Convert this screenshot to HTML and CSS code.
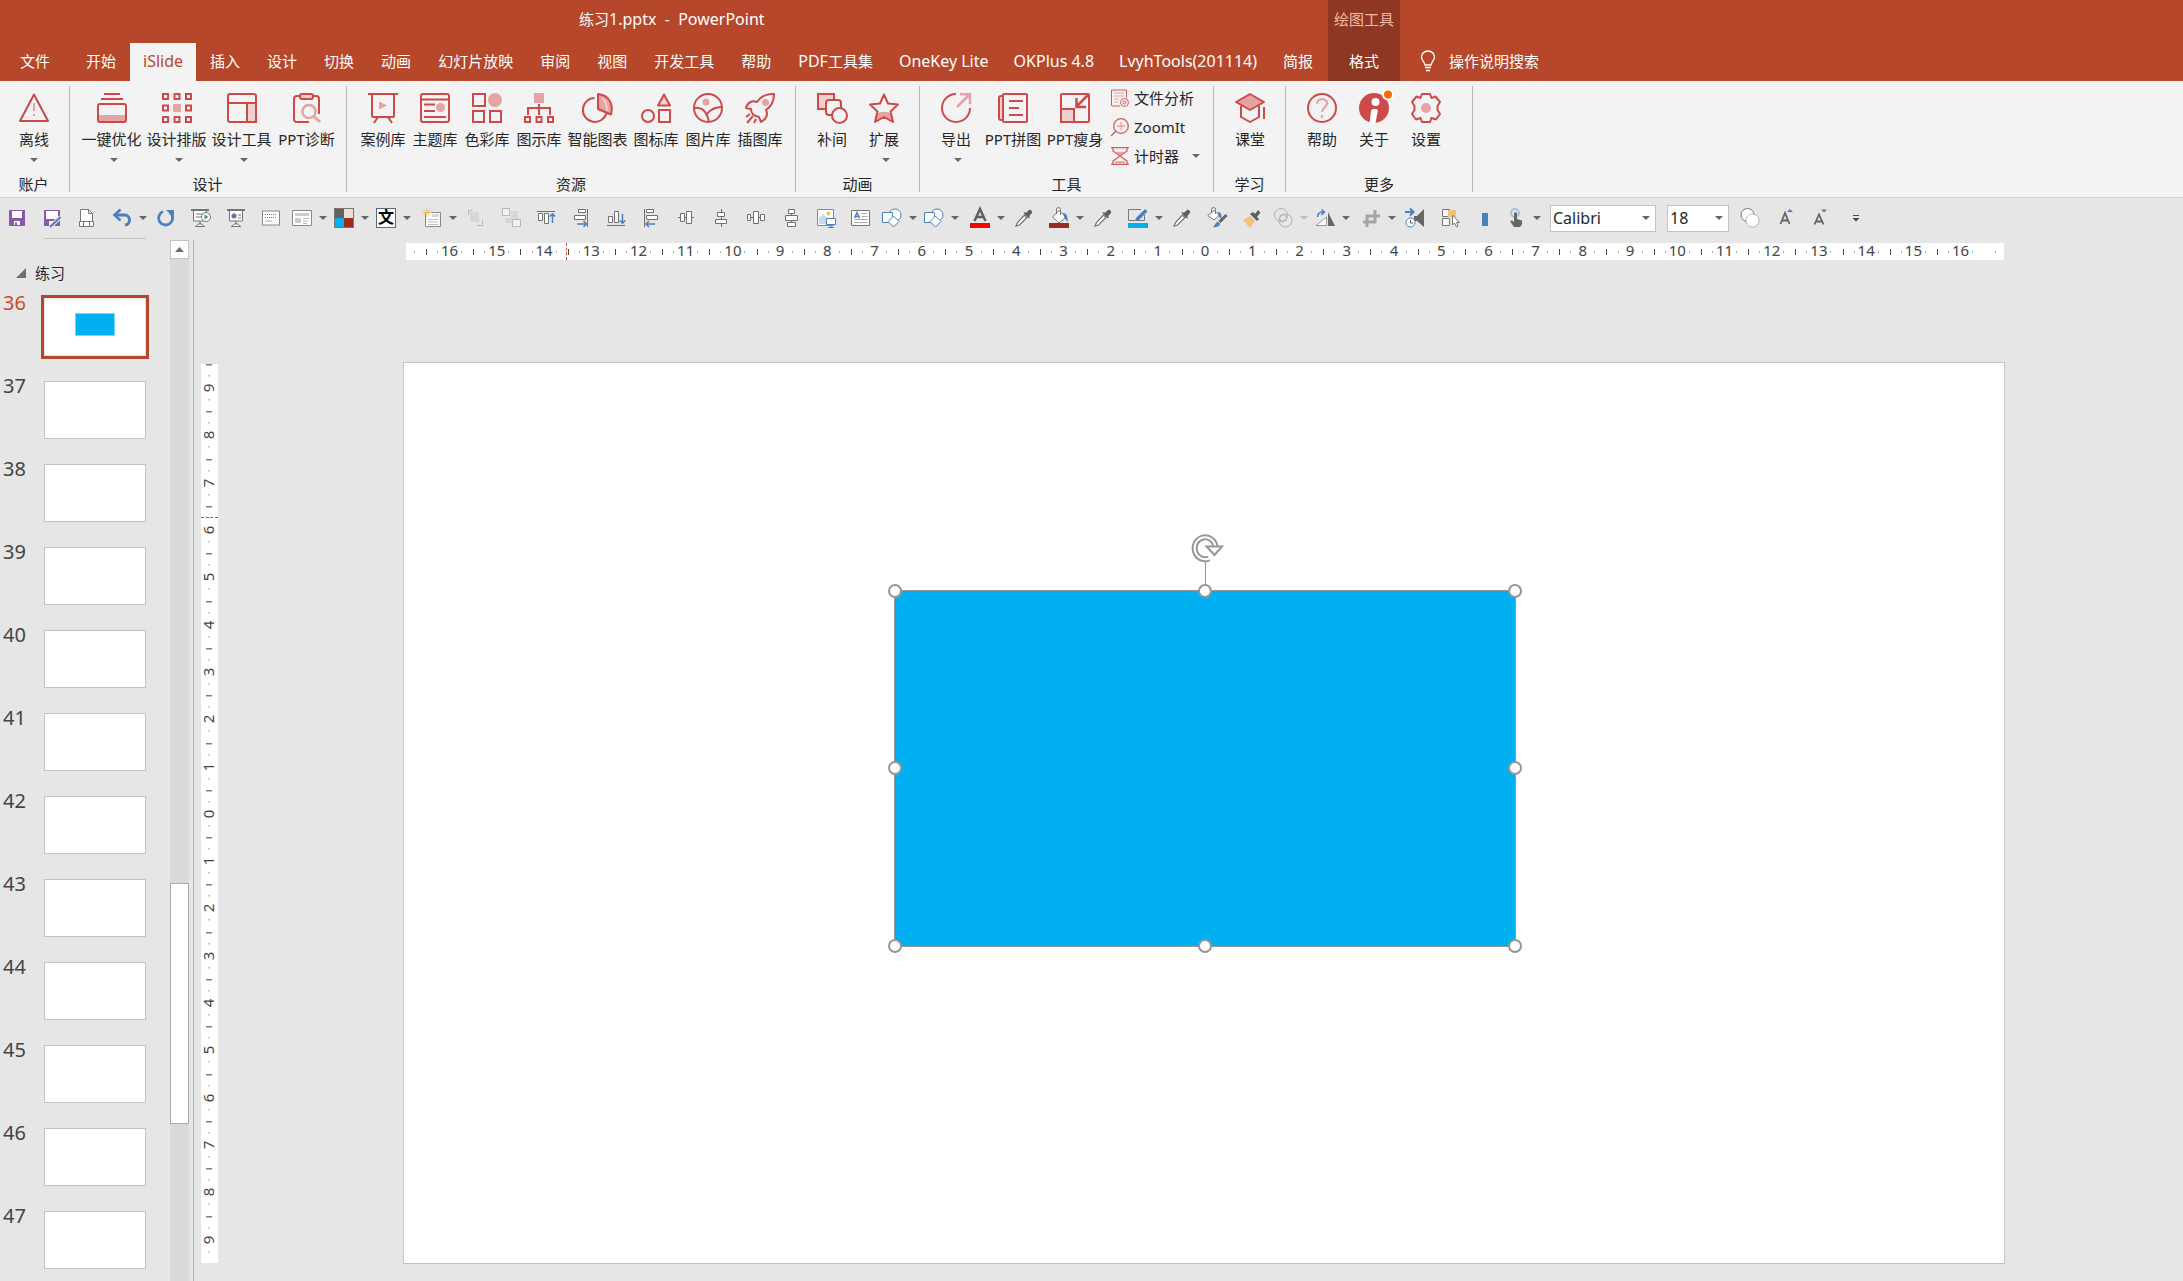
FILE: index.html
```html
<!DOCTYPE html>
<html lang="zh-CN">
<head>
<meta charset="utf-8">
<meta name="viewport" content="width=device-width, initial-scale=1">
<title>练习1.pptx - PowerPoint</title>
<link rel="stylesheet" href="styles.css">
</head>
<body>
<svg class="sprite" aria-hidden="true">
  <symbol id="dropper" viewBox="0 0 20 20"><path d="M2 18l1.500-3.500L10.500 7l2.500 2.500-7.500 7.500z" fill="#fff" stroke="#6e6e6e" stroke-width="1.200"/><path d="M9.500 5l5.500 5.500 1-1.200-1-1 3-3.300c1-1.500-1.500-4-3-3L11.800 5l-1-1z" fill="#5f5f5f"/></symbol>
  <symbol id="shapes" viewBox="0 0 20 20"><circle cx="13" cy="7" r="6" fill="#fff" stroke="#4a80bd"/><path d="M.5 4.500h10v10H.5z" fill="#fff" stroke="#4a80bd"/><path d="M11.500 8l5.500 5.500-5.500 5.500L6 13.500z" fill="#fff" stroke="#4a80bd"/></symbol>
</svg>

<header class="titlebar">
  <h1 class="title">练习<span class="latin">1.pptx&nbsp; -&nbsp; PowerPoint</span></h1>
  <nav class="tabs" aria-label="功能区选项卡">
    <button class="tab tab-file">文件</button>
    <button class="tab">开始</button>
    <button class="tab latin is-active">iSlide</button>
    <button class="tab">插入</button>
    <button class="tab">设计</button>
    <button class="tab">切换</button>
    <button class="tab">动画</button>
    <button class="tab">幻灯片放映</button>
    <button class="tab">审阅</button>
    <button class="tab">视图</button>
    <button class="tab">开发工具</button>
    <button class="tab">帮助</button>
    <button class="tab"><span class="latin">PDF</span>工具集</button>
    <button class="tab latin addin">OneKey Lite</button>
    <button class="tab latin addin">OKPlus 4.8</button>
    <button class="tab latin addin">LvyhTools(201114)</button>
    <button class="tab">简报</button>
    <div class="context">
      <span class="context-name">绘图工具</span>
      <button class="tab">格式</button>
    </div>
    <button class="tab tellme">
      <svg width="16" height="22" viewBox="0 0 16 22" fill="none" stroke="#fff" stroke-width="1.400"><path d="M5 15c0-3-3.500-4-3.500-8a6.500 6 0 0 1 13 0c0 4-3.500 5-3.500 8zM5 17.500h6M6 20.500h4"/></svg>
      操作说明搜索
    </button>
  </nav>
</header>

<section class="ribbon" aria-label="iSlide">
  <div class="group g-account">
    <div class="tools">
      <button class="big"><svg viewBox="0 0 30 30" fill="none" stroke="#c8494a" stroke-width="2" stroke-linejoin="round"><path d="M15 1.500L29 28H1z"/><path d="M15 10v8M15 21v2" stroke="#e5a3a3"/></svg><span>离线</span><i class="caret"></i></button>
    </div>
    <h2>账户</h2>
  </div>
  <div class="group g-design">
    <div class="tools">
      <button class="big four"><svg viewBox="0 0 30 30" fill="none" stroke="#ce4a4a" stroke-width="2"><path d="M1 22h28v7H1z" fill="#e5a3a3" stroke="none"/><path d="M7 1h16M4 6h22"/><rect x="1" y="11" width="28" height="18" rx="2"/></svg><span>一键优化</span><i class="caret"></i></button>
      <button class="big four"><svg viewBox="0 0 30 30" fill="none" stroke="#ce4a4a" stroke-width="2"><path d="M1 1h5v5H1zM12.500 1h5v5h-5zM24 1h5v5h-5zM1 12.500h5v5H1zM24 12.500h5v5h-5zM1 24h5v5H1zM12.500 24h5v5h-5zM24 24h5v5h-5z"/><rect x="11" y="11" width="8" height="8" rx="1" fill="#e5a3a3" stroke="none"/></svg><span>设计排版</span><i class="caret"></i></button>
      <button class="big four"><svg viewBox="0 0 30 30" fill="none" stroke="#ce4a4a" stroke-width="2"><path d="M20 10h9v19h-9z" fill="#f2d0d0"/><rect x="1" y="1" width="28" height="28" rx="2"/><path d="M1 10h28"/></svg><span>设计工具</span><i class="caret"></i></button>
      <button class="big four"><svg viewBox="0 0 30 30" fill="none" stroke="#ce4a4a" stroke-width="2"><path d="M17 29H5a3 3 0 0 1-3-3V6a3 3 0 0 1 3-3h3M21 3h3a3 3 0 0 1 3 3v15"/><rect x="8" y="1" width="13" height="5" rx="2" fill="#f2d0d0"/><circle cx="17" cy="18.500" r="6.500" stroke="#e5a3a3" stroke-width="2.500"/><path d="M22 23.500l6 5.500" stroke="#e5a3a3" stroke-width="3"/></svg><span>PPT诊断</span></button>
    </div>
    <h2>设计</h2>
  </div>
  <div class="group g-assets">
    <div class="tools">
      <button class="big"><svg viewBox="0 0 30 30" fill="none" stroke="#ce4a4a" stroke-width="2"><path d="M0 1h30M4 1v22a1 1 0 0 0 1 1h20a1 1 0 0 0 1-1V1M10 24l-4 6M20 24l4 6"/><path d="M11 8.500l8 4-8 4z" fill="#e5a3a3" stroke="none"/></svg><span>案例库</span></button>
      <button class="big"><svg viewBox="0 0 30 30" fill="none" stroke="#ce4a4a" stroke-width="2"><rect x="1" y="1" width="28" height="28" rx="2"/><path d="M1 6.500h28M4 11.500h11M4 18h11M4 24h22"/><circle cx="20.500" cy="14.500" r="4.500" fill="#e5a3a3" stroke="none"/></svg><span>主题库</span></button>
      <button class="big"><svg viewBox="0 0 30 30" fill="none" stroke="#ce4a4a" stroke-width="2"><path d="M1 1h12v12H1zM1 18h11v11H1zM18 18h11v11H18z"/><circle cx="23" cy="7" r="7" fill="#e5a3a3" stroke="none"/></svg><span>色彩库</span></button>
      <button class="big"><svg viewBox="0 0 30 30" fill="none" stroke="#ce4a4a" stroke-width="2"><path d="M10 0h10v10H10z" fill="#e5a3a3" stroke="none"/><path d="M15 11v11M4 22v-7h22v7M1 24h5v5H1zM12.500 24h5v5h-5zM24 24h5v5h-5z"/></svg><span>图示库</span></button>
      <button class="big four"><svg viewBox="0 0 30 30" fill="none" stroke="#ce4a4a" stroke-width="2" stroke-linejoin="round"><path d="M11.500 5a12 12 0 1 0 12 15"/><path d="M15 1v15l13 5.500C31 10 25 2 15 1z" fill="#e5a3a3"/><path d="M19 5c4 3 5 8 5 13" stroke="#f2d0d0"/></svg><span>智能图表</span></button>
      <button class="big"><svg viewBox="0 0 30 30" fill="none" stroke="#ce4a4a" stroke-width="2" stroke-linejoin="round"><circle cx="7" cy="23" r="6"/><path d="M18 17h11v12H18z"/><path d="M23 1.500l6 11H17z" fill="#f2d0d0"/></svg><span>图标库</span></button>
      <button class="big"><svg viewBox="0 0 30 30" fill="none" stroke="#ce4a4a" stroke-width="2"><circle cx="15" cy="15" r="14"/><path d="M1.500 15C9 14 14 19 16 29M29 14c-8 0-12 3-15 7"/><circle cx="13" cy="9" r="3.500" fill="#e5a3a3" stroke="none"/></svg><span>图片库</span></button>
      <button class="big"><svg viewBox="0 0 30 30" fill="none" stroke="#ce4a4a" stroke-width="2" stroke-linejoin="round"><path d="M29 1c-8-.5-13 2-17 8-5-2-9 0-11 6l5 1c0 4 3 7 8 8l2 5c6-3 7-8 5-12 6-4 8-9 8-16z"/><circle cx="20.500" cy="9.500" r="3.500" fill="#e5a3a3" stroke="none"/><path d="M5 21l-4 3M8 23l-6 7M11 26l-2 4"/></svg><span>插图库</span></button>
    </div>
    <h2>资源</h2>
  </div>
  <div class="group g-anim">
    <div class="tools">
      <button class="big"><svg viewBox="0 0 30 30" fill="none" stroke="#ce4a4a" stroke-width="2"><path d="M1 1h16v15H1z" fill="#f2d0d0"/><rect x="9" y="7" width="15" height="15" rx="3" fill="#f3f3f3"/><circle cx="22.500" cy="22.500" r="7.500" fill="#f3f3f3"/></svg><span>补间</span></button>
      <button class="big"><svg viewBox="0 0 30 30" fill="none" stroke="#ce4a4a" stroke-width="2" stroke-linejoin="round"><path d="M7 21c5-3 11-3 16 0l1 7-9-4-9 4z" fill="#e5a3a3" stroke="none"/><path d="M15 1.500l4 9 10 1-7.500 7L24 29l-9-5-9 5 2.500-10.500L1 11.500l10-1z"/></svg><span>扩展</span><i class="caret"></i></button>
    </div>
    <h2>动画</h2>
  </div>
  <div class="group g-tools">
    <div class="tools">
      <button class="big"><svg viewBox="0 0 30 30" fill="none" stroke="#ce4a4a" stroke-width="2"><path d="M15 1a14 14 0 1 0 14 14"/><path d="M16 14L28 2M19 1.200h10v10" stroke="#e5a3a3" stroke-width="2.500"/></svg><span>导出</span><i class="caret"></i></button>
      <button class="big ppt"><svg viewBox="0 0 30 30" fill="none" stroke="#ce4a4a" stroke-width="2"><path d="M5 3H3a2 2 0 0 0-2 2v20a2 2 0 0 0 2 2h2z" fill="#f2d0d0"/><rect x="5" y="1" width="24" height="28" rx="1"/><path d="M11 8h14M11 15h10M11 22h14"/></svg><span>PPT拼图</span></button>
      <button class="big ppt"><svg viewBox="0 0 30 30" fill="none" stroke="#ce4a4a" stroke-width="2"><path d="M1 16h13v13H1z" fill="#f2d0d0"/><rect x="1" y="1" width="28" height="28" rx="1"/><path d="M28 2L17 13M16.500 5v9H26" stroke-width="2.500"/></svg><span>PPT瘦身</span></button>
      <div class="small-tools">
        <button class="small"><svg width="18" height="18" viewBox="0 0 18 18" fill="none" stroke="#d25a5a"><path d="M9 17H1.500A1 1 0 0 1 .5 16V1h15v8"/><path d="M3 4h10M3 7h10M3 10h5M3 13h4" stroke="#e5a3a3"/><circle cx="13.500" cy="13.500" r="4" fill="#f3f3f3"/><circle cx="13.500" cy="13.500" r="1.500"/></svg><span>文件分析</span></button>
        <button class="small"><svg width="18" height="18" viewBox="0 0 18 18" fill="none" stroke="#d25a5a" stroke-width="1.300"><circle cx="10" cy="8" r="7.300"/><path d="M5 13L0 18"/><path d="M10 4v8M6 8h8" stroke="#e5a3a3"/></svg><span>ZoomIt</span></button>
        <button class="small"><svg width="18" height="18" viewBox="0 0 18 18" fill="none" stroke="#d25a5a" stroke-width="1.300"><path d="M0 .7h18M0 17.300h18M2 1v3l14 10v3M16 1v3L2 14v3"/><path d="M5 5h8l-4 3.500z" fill="#e5a3a3" stroke="none"/><path d="M4 14h10v2.500H4z" fill="#e5a3a3" stroke="none"/></svg><span>计时器</span><i class="caret"></i></button>
      </div>
    </div>
    <h2>工具</h2>
  </div>
  <div class="group g-learn">
    <div class="tools">
      <button class="big"><svg viewBox="0 0 30 30" fill="none" stroke="#ce4a4a" stroke-width="2" stroke-linejoin="round"><path d="M15 1l14 8-14 8L1 9z" fill="#e5a3a3"/><path d="M6 13v11l9 5 9-5V13M29 14v12"/></svg><span>课堂</span></button>
    </div>
    <h2>学习</h2>
  </div>
  <div class="group g-more">
    <div class="tools">
      <button class="big"><svg viewBox="0 0 30 30" fill="none" stroke="#ce4a4a" stroke-width="2"><circle cx="15" cy="15" r="14"/><path d="M10 11c0-7 11-6 10 0-.5 3-5 4-5 8M15 22v3" stroke="#e5a3a3" stroke-width="2.200"/></svg><span>帮助</span></button>
      <button class="big"><svg viewBox="0 0 30 30"><circle cx="15" cy="15" r="15" fill="#ce4a4a"/><circle cx="16.500" cy="9" r="4" fill="#fff"/><path d="M10.500 30l1.500-12c.5-3 7-3 6.800 0L16.500 30z" fill="#fff"/><circle cx="29" cy="1.500" r="6" fill="#fff"/><circle cx="29" cy="1.500" r="4" fill="#ff6a00"/></svg><span>关于</span></button>
      <button class="big"><svg viewBox="0 0 30 30" fill="none" stroke="#ce4a4a" stroke-width="2" stroke-linejoin="round"><path d="M11 1h8l1.500 4 4-1.500L29 9l-2.500 4v4L29 21l-4 5.500-4.500-1.500-1.500 4h-8l-1.500-4L5 26.500 1 21l2.500-4v-4L1 9l4.500-5.500 4 1.500z"/><circle cx="15" cy="15" r="5" fill="#e5a3a3" stroke="none"/></svg><span>设置</span></button>
    </div>
    <h2>更多</h2>
  </div>
</section>

<div class="quick" role="toolbar" aria-label="快速访问工具栏">
  <button class="q" aria-label="保存"><svg viewBox="0 0 20 20"><path d="M2 2h16v16H2z" fill="#8b58ab"/><path d="M5 3h10v7H5zM7 13h6v4H7z" fill="#fff"/><path d="M8 14.500h2V17H8z" fill="#8b58ab"/></svg></button>
  <button class="q" aria-label="另存为"><svg viewBox="0 0 20 20"><path d="M2 2h16v16H2z" fill="#8b58ab"/><path d="M4 3h12v8H4zM7 13h6v4H7z" fill="#fff"/><path d="M8 19L18.500 9" stroke="#e6e6e6" stroke-width="4"/><path d="M8 19L18.500 9" stroke="#4a80bd" stroke-width="2"/></svg></button>
  <button class="q" aria-label="打印预览"><svg viewBox="0 0 20 20" fill="#fff" stroke="#777"><path d="M3.500 13V1.500h8l4 4V13"/><path d="M11.500 1.500v4h4" fill="none"/><path d="M2.500 13.500v5h14v-5zM6.500 13.500v5h6v-5z"/></svg></button>
  <button class="q split" aria-label="撤消"><svg viewBox="0 0 20 20" fill="none" stroke="#4a80bd" stroke-width="3"><path d="M4 7h8a5 5 0 0 1 1 10"/><path d="M8.500 1.500L2.500 7l6 5.500" stroke-width="2.500"/></svg><i class="caret"></i></button>
  <button class="q" aria-label="重复"><svg viewBox="0 0 20 20"><path d="M7 3.500a7 7 0 1 0 7 1" fill="none" stroke="#4a80bd" stroke-width="2.800"/><path d="M10 2h8v8z" fill="#4a80bd"/></svg></button>
  <button class="q" aria-label="从头放映"><svg viewBox="0 0 20 20" fill="#fff" stroke="#777"><path d="M0 2h18" stroke-width="2"/><path d="M2.500 3v10h13V3M5 6h8M5 9h5M9 13v4M5 18l4-3 4 3M4 18.500h10"/><circle cx="15" cy="9" r="4.500"/><path d="M13.500 6.500l4 2.500-4 2.500z" fill="#4a9a78" stroke="none"/></svg></button>
  <button class="q" aria-label="从当前幻灯片放映"><svg viewBox="0 0 20 20" fill="#fff" stroke="#777"><path d="M1 2h18" stroke-width="2"/><path d="M3.500 3v10h13V3M10 13v4M6 18l4-3 4 3M5 18.500h10"/><path d="M12 7h3M12 10h3"/><circle cx="8" cy="8" r="2.500" fill="#4a80bd" stroke="none"/><path d="M8 8V5.500A2.500 2.500 0 0 1 10.500 8z" fill="#e0532c" stroke="none"/></svg></button>
  <button class="q" aria-label="文本"><svg viewBox="0 0 20 20" fill="#fff" stroke="#888"><rect x="1.500" y="3" width="17" height="14"/><path d="M4 6.500h12M4 9.500h12" stroke="#4a80bd" stroke-dasharray="1 1"/><path d="M4 13h7" stroke="#9ab6d6"/></svg></button>
  <button class="q split wide" aria-label="版式"><svg viewBox="0 0 20 20" fill="#fff" stroke="#888"><path d="M.5 2.500h19v15H.5z"/><path d="M3 5h14v3H3zM3 10h6v5H3z" fill="#ccc" stroke="none"/><path d="M11 10.500h6M11 13h5M11 15.500h4" stroke="#bbb"/></svg><i class="caret"></i></button>
  <button class="q split wide" aria-label="主题颜色"><svg viewBox="0 0 20 20"><path d="M0 0h20v20H0z" fill="#777"/><path d="M1 1h9v9H1z" fill="#666160"/><path d="M10 1h9v9h-9z" fill="#e8e1da"/><path d="M1 10h9v9H1z" fill="#00b0f0"/><path d="M10 10h9v9h-9z" fill="#9a2d20"/></svg><i class="caret"></i></button>
  <button class="q split wide" aria-label="主题字体"><b class="font-icon">文</b><i class="caret"></i></button>
  <button class="q split" aria-label="新建幻灯片"><svg viewBox="0 0 20 20" fill="#fff" stroke="#888"><path d="M3.500 4.500h15v14h-15z"/><path d="M10 6h7v3h-7z" fill="#d8d8d8" stroke="none"/><path d="M6 11.500h10M6 14h10M6 16.500h10" stroke="#bbb"/><path d="M5 0v9M.5 4.500h9M2 1.500l6 6M8 1.500l-6 6" stroke="#f0be62"/></svg><i class="caret"></i></button>
  <button class="q" aria-label="组合"><svg viewBox="0 0 20 20" fill="none" stroke="#b5b5b5"><path d="M4 4h9v10H4z" fill="#d9d5db" stroke="none"/><path d="M2.500 7V2.500h4M11 17.500h5.500v-5"/></svg></button>
  <button class="q" aria-label="取消组合"><svg viewBox="0 0 20 20" fill="#f4f1f6" stroke="#b9b5bd"><path d="M10 3h7v8h-7zM4 10h7v5H4z" fill="#d9d5db" stroke="none"/><path d="M1.500.5h7v7h-7zM11.500 11.500h8v7h-8z"/></svg></button>
  <button class="q" aria-label="顶端对齐"><svg viewBox="0 0 20 20" fill="#fff" stroke="#707070"><path d="M1 3.500h18"/><path d="M2.500 5.500h4v7h-4zM8.500 5.500h4v10h-4z"/><path d="M16.500 15V6M13.800 8.500l2.700-2.700 2.700 2.700" stroke="#4a80bd" stroke-width="1.500" fill="none"/></svg></button>
  <button class="q" aria-label="右对齐"><svg viewBox="0 0 20 20" fill="#fff" stroke="#707070"><path d="M16.500 1v18"/><path d="M7.500 1.500h7v3h-7zM3.500 7.500h11v4h-11z"/><path d="M6 16h9M12.500 13l3 3-3 3" stroke="#4a80bd" stroke-width="1.500" fill="none"/></svg></button>
  <button class="q" aria-label="底端对齐"><svg viewBox="0 0 20 20" fill="#fff" stroke="#707070"><path d="M1 17.500h18"/><path d="M2.500 8.500h4v6h-4zM8.500 3.500h4v11h-4z"/><path d="M16.500 6v9M13.800 12.500l2.700 2.700 2.700-2.700" stroke="#4a80bd" stroke-width="1.500" fill="none"/></svg></button>
  <button class="q" aria-label="左对齐"><svg viewBox="0 0 20 20" fill="#fff" stroke="#707070"><path d="M3.500 1v18"/><path d="M5.500 1.500h7v3h-7zM5.500 7.500h11v4h-11z"/><path d="M5 16h9M8 13l-3 3 3 3" stroke="#4a80bd" stroke-width="1.500" fill="none"/></svg></button>
  <button class="q" aria-label="垂直居中"><svg viewBox="0 0 20 20" fill="#fff" stroke="#707070"><path d="M2 9.500h16"/><path d="M4.500 5.500h4v8h-4zM10.500 3.500h5v12h-5z"/></svg></button>
  <button class="q" aria-label="水平居中"><svg viewBox="0 0 20 20" fill="#fff" stroke="#707070"><path d="M10.500 1v18"/><path d="M6.500 4.500h7v4h-7zM4.500 11.500h11v4h-11z"/></svg></button>
  <button class="q" aria-label="横向分布"><svg viewBox="0 0 20 20" fill="#fff" stroke="#707070"><path d="M1.500 6.500h3v6h-3zM7.500 3.500h5v12h-5zM14.500 6.500h4v6h-4zM4.500 9.500h3M12.500 9.500h2"/></svg></button>
  <button class="q" aria-label="纵向分布"><svg viewBox="0 0 20 20" fill="#fff" stroke="#707070"><path d="M7.500 1.500h6v4h-6zM4.500 7.500h12v5h-12zM6.500 14.500h8v4h-8zM10.500 5.500v2M10.500 12.500v2"/></svg></button>
  <button class="q" aria-label="插入图片"><svg viewBox="0 0 20 20" fill="#fff" stroke="#888"><path d="M1.500 1.500h16v16h-16z"/><path d="M3 16v-6l4-4 6 5v5z" fill="#c9d9ea" stroke="none"/><circle cx="12.500" cy="5.500" r="2" fill="#f0be62" stroke="none"/><path d="M10.500 10.500h9v6h-9zM15 16.500v2.500M12 19.500h6" stroke="#4a80bd"/></svg></button>
  <button class="q" aria-label="文本框"><svg viewBox="0 0 20 20" fill="#fff" stroke="#777"><path d="M.5 2.500h18v15H.5z"/><path d="M3.500 10L6 4.500 8.500 10M4.500 8.500h3" fill="none" stroke="#4a80bd" stroke-width="1.500"/><path d="M10.500 5.500h6M10.500 8.500h6M3.500 11.500h13M3.500 14.500h13" stroke="#aaa"/></svg></button>
  <button class="q split wide" aria-label="形状"><svg><use href="#shapes"/></svg><i class="caret"></i></button>
  <button class="q split wide" aria-label="更改形状"><svg><use href="#shapes"/></svg><i class="caret"></i></button>
  <button class="q split" aria-label="字体颜色"><svg viewBox="0 0 20 20"><path d="M4.500 13L10 1l5.500 12M6.500 9h7" fill="none" stroke="#5f5f5f" stroke-width="2.500"/><path d="M0 15h20v5H0z" fill="#f00"/></svg><i class="caret"></i></button>
  <button class="q" aria-label="字体取色器"><svg><use href="#dropper"/></svg></button>
  <button class="q split" aria-label="形状填充"><svg viewBox="0 0 20 20"><path d="M10 2.500l7 6.500-7 6-6.500-6z" fill="#fff" stroke="#777"/><path d="M7.500 6V1.500a2 2 0 0 1 4 0V7" fill="none" stroke="#777"/><path d="M14 5c4 0 5 4 4.500 9l-3-4z" fill="#4a80bd"/><path d="M0 15h20v5H0z" fill="#9a2d20"/></svg><i class="caret"></i></button>
  <button class="q" aria-label="填充取色器"><svg><use href="#dropper"/></svg></button>
  <button class="q split" aria-label="形状轮廓"><svg viewBox="0 0 20 20"><path d="M13 1.500H.5v11h16V7" fill="none" stroke="#777"/><path d="M7 13l1-3L17 1l2.500 2.500-9 9z" fill="#4a80bd"/><path d="M0 15h20v5H0z" fill="#00b0f0"/></svg><i class="caret"></i></button>
  <button class="q" aria-label="轮廓取色器"><svg><use href="#dropper"/></svg></button>
  <button class="q" aria-label="格式"><svg viewBox="0 0 20 20"><path d="M7 2.500l5.500 4.500L7 12 .8 7.500z" fill="#fff" stroke="#777"/><path d="M4.500 5V1.500a2 2 0 0 1 4 0V6" fill="none" stroke="#777"/><path d="M11 4c3 0 4 3 3 7l-2.500-3z" fill="#4a80bd"/><path d="M19.500 7l-7 7" stroke="#666" stroke-width="3"/><path d="M5 19c3 0 3-5 6-5 4 1 2 6-6 5z" fill="#4a80bd"/></svg></button>
  <button class="q" aria-label="格式刷"><svg viewBox="0 0 20 20"><path d="M1 12l7-4 5 5-5 7z" fill="#f0c27a"/><path d="M8 6l7 7 2-2-2-2 3.500-4.500L16 2l-3 4-2-2z" fill="#5f5f5f"/></svg></button>
  <button class="q split wide" aria-label="合并形状"><svg viewBox="0 0 20 20" fill="none" stroke="#b0b0b0"><circle cx="8" cy="7" r="6.500"/><circle cx="12.500" cy="12.500" r="6.500"/><circle cx="10" cy="10" r="3.500"/></svg><i class="caret pale"></i></button>
  <button class="q split wide" aria-label="旋转"><svg viewBox="0 0 20 20"><path d="M11.500 9v8.500H1z" fill="#fff" stroke="#999"/><path d="M13 4v14h7z" fill="#666"/><path d="M2.500 9c0-3 2-5 6-5M6.500 1.500L9.500 4l-3 3" fill="none" stroke="#4a80bd" stroke-width="1.500"/></svg><i class="caret"></i></button>
  <button class="q split" aria-label="裁剪"><svg viewBox="0 0 20 20" fill="none" stroke="#a5a5a5" stroke-width="3"><path d="M6 19V8h13M14 2v12H2"/></svg><i class="caret"></i></button>
  <button class="q" aria-label="音频"><svg viewBox="0 0 20 20"><path d="M9 8h3l7-7v18l-7-6H9z" fill="#666"/><path d="M0 4h8M5 .5L8.500 4 5 7.500" fill="none" stroke="#4a80bd" stroke-width="2"/><circle cx="5.500" cy="14.500" r="4.500" fill="#fff" stroke="#4a80bd"/><path d="M5.500 12v3H8" fill="none" stroke="#555"/></svg></button>
  <button class="q" aria-label="选择窗格"><svg viewBox="0 0 20 20" fill="#fff" stroke="#777"><path d="M2.500 1.500h7v7h-7zM2.500 10.500h7v7h-7z"/><path d="M8 2h8v7H8z" fill="#f0c27a" stroke="none"/><path d="M12.500 7v10l2-2 2 4 1.500-1-1.500-3.500h3z"/></svg></button>
  <button class="q" aria-label="标记"><svg viewBox="0 0 20 20"><path d="M7 5h6v13H7z" fill="#4a80bd"/></svg></button>
  <button class="q split wide" aria-label="触摸模式"><svg viewBox="0 0 20 20"><circle cx="9" cy="5" r="4" fill="none" stroke="#a7c0dd" stroke-width="2"/><path d="M8 4.500h3V11l5 1.500v4L14 19H8l-4-6 2-.5 2 1.500z" fill="#666"/></svg><i class="caret"></i></button>
  <label class="combo combo-font"><select aria-label="字体"><option>Calibri</option></select><i class="caret"></i></label>
  <label class="combo combo-size"><select aria-label="字号"><option>18</option></select><i class="caret"></i></label>
  <button class="q" aria-label="剪除形状"><svg viewBox="0 0 20 20" fill="#fff" stroke="#777"><circle cx="7.500" cy="7" r="6.500"/><circle cx="12.500" cy="12.500" r="6.500" stroke-dasharray="1 1"/></svg></button>
  <button class="q" aria-label="增大字号"><svg viewBox="0 0 20 20"><path d="M5.500 16L10 5l4.500 11M7 12.500h6" fill="none" stroke="#666" stroke-width="1.800"/><path d="M12 4l3-3 3 3z" fill="#4a80bd"/></svg></button>
  <button class="q" aria-label="减小字号"><svg viewBox="0 0 20 20"><path d="M4.500 16.500L9 6.500l4.500 10M6 13.500h6" fill="none" stroke="#666" stroke-width="1.800"/><path d="M11 1.500l3 3 3-3z" fill="#4a80bd"/></svg></button>
  <button class="q" aria-label="自定义快速访问工具栏"><svg viewBox="0 0 20 20"><path d="M8 7.500h6" stroke="#444"/><path d="M7.500 10h7L11 13.500z" fill="#444"/></svg></button>
</div>

<main class="workspace">
  <aside class="pane">
    <div class="thumbs">
      <div class="thumb-prev"></div>
      <button class="section"><svg width="10" height="10" viewBox="0 0 10 10"><path d="M10 0v10H0z" fill="#6e6e6e"/></svg>练习</button>
      <ol class="slides">
        <li class="is-current"><span>36</span><a href="#s36" aria-label="幻灯片 36"><i class="mini"></i></a></li>
        <li><span>37</span><a href="#s37" aria-label="幻灯片 37"></a></li>
        <li><span>38</span><a href="#s38" aria-label="幻灯片 38"></a></li>
        <li><span>39</span><a href="#s39" aria-label="幻灯片 39"></a></li>
        <li><span>40</span><a href="#s40" aria-label="幻灯片 40"></a></li>
        <li><span>41</span><a href="#s41" aria-label="幻灯片 41"></a></li>
        <li><span>42</span><a href="#s42" aria-label="幻灯片 42"></a></li>
        <li><span>43</span><a href="#s43" aria-label="幻灯片 43"></a></li>
        <li><span>44</span><a href="#s44" aria-label="幻灯片 44"></a></li>
        <li><span>45</span><a href="#s45" aria-label="幻灯片 45"></a></li>
        <li><span>46</span><a href="#s46" aria-label="幻灯片 46"></a></li>
        <li><span>47</span><a href="#s47" aria-label="幻灯片 47"></a></li>
      </ol>
    </div>
    <div class="scrollbar">
      <button class="scroll-up" aria-label="向上滚动"><svg width="9" height="5" viewBox="0 0 9 5"><path d="M0 5l4.500-5L9 5z" fill="#6e6e6e"/></svg></button>
      <div class="track-above"></div>
      <div class="scroll-thumb"></div>
      <div class="track-below"></div>
    </div>
  </aside>
  <section class="editor">
    <div class="ruler ruler-h">
      <span>16</span><span>15</span><span>14</span><span>13</span><span>12</span><span>11</span><span>10</span><span>9</span><span>8</span><span>7</span><span>6</span><span>5</span><span>4</span><span>3</span><span>2</span><span>1</span><span>0</span><span>1</span><span>2</span><span>3</span><span>4</span><span>5</span><span>6</span><span>7</span><span>8</span><span>9</span><span>10</span><span>11</span><span>12</span><span>13</span><span>14</span><span>15</span><span>16</span>
      <i class="marker"></i>
    </div>
    <div class="ruler ruler-v">
      <span>9</span><span>8</span><span>7</span><span>6</span><span>5</span><span>4</span><span>3</span><span>2</span><span>1</span><span>0</span><span>1</span><span>2</span><span>3</span><span>4</span><span>5</span><span>6</span><span>7</span><span>8</span><span>9</span>
      <i class="marker"></i>
    </div>
    <div class="slide">
      <div class="shape">
        <svg class="rotate" width="34" height="62" viewBox="0 0 34 62" fill="none" stroke="#969696"><path d="M17.500 30v32"/><path d="M27.500 17.500A10.500 11 0 1 0 21 29.500" stroke-width="6"/><path d="M27.500 17.500A10.500 11 0 1 0 21 29.500" stroke="#fff" stroke-width="2"/><path d="M18.500 17.500H34L26.500 26z" fill="#fff" stroke-width="2"/></svg>
        <i class="handle nw"></i><i class="handle n"></i><i class="handle ne"></i>
        <i class="handle w"></i><i class="handle e"></i>
        <i class="handle sw"></i><i class="handle s"></i><i class="handle se"></i>
      </div>
    </div>
  </section>
</main>
</body>
</html>
```
FILE: styles.css
```css
* {
  box-sizing: border-box;
}

body {
  margin: 0;
  min-height: 100vh;
  display: flex;
  flex-direction: column;
  background: #e6e6e6;
  color: #262626;
  font: 15px/20px "Noto Sans", "Noto Sans CJK SC", sans-serif;
  overflow-x: hidden;
}

button {
  margin: 0;
  padding: 0;
  border: 0;
  background: none;
  color: inherit;
  font: inherit;
  white-space: nowrap;
}

h1,
h2 {
  margin: 0;
  font: inherit;
}

svg {
  display: block;
  overflow: visible;
}

.sprite {
  position: absolute;
  width: 0;
  height: 0;
}

.latin {
  font-size: 16px;
}

.caret {
  width: 0;
  height: 0;
  border: 4px solid transparent;
  border-top-color: #666;
  border-bottom: 0;
}

.caret.pale {
  border-top-color: #bdbdbd;
}

/* Title bar and tabs */

.titlebar {
  display: grid;
  grid-template-rows: 43px 38px;
  background: #b7472a;
  color: #fff;
}

.title {
  padding-left: 579px;
  line-height: 38px;
  white-space: pre;
}

.tabs {
  display: flex;
  gap: 1px;
}

.tab {
  padding: 0 13px 2px;
  line-height: 36px;
}

.tab-file {
  width: 72px;
  padding: 0 20px 2px;
  text-align: left;
}

.tab.addin {
  padding: 0 12px 2px;
}

.tab.is-active {
  background: #f3f3f3;
  color: #b7472a;
}

.context {
  display: flex;
  flex-direction: column;
  width: 72px;
  margin: -43px 0 0 1px;
  background: #8e3722;
  text-align: center;
}

.context-name {
  line-height: 38px;
  padding-bottom: 5px;
  color: #f3b9a6;
}

.tellme {
  display: flex;
  align-items: center;
  gap: 13px;
  padding-left: 19px;
}

/* Ribbon */

.ribbon {
  display: flex;
  height: 117px;
  padding: 5px 0;
  background: #f3f3f3;
  border-bottom: 1px solid #d0d0d0;
}

.group {
  display: flex;
  flex-direction: column;
  justify-content: space-between;
  flex: none;
  padding-left: 10px;
  border-right: 1px solid #b4b4b4;
}

.g-account { width: 70px; padding-left: 8px; }
.g-design { width: 277px; padding-left: 9px; }
.g-assets { width: 449px; }
.g-anim { width: 124px; }
.g-tools { width: 294px; }
.g-learn { width: 72px; }
.g-more { width: 187px; }

.group h2 {
  margin-left: -10px;
  line-height: 16px;
  text-align: center;
}

.tools {
  display: flex;
  align-items: flex-start;
}

.big {
  display: flex;
  flex-direction: column;
  align-items: center;
  width: 52px;
  padding-top: 7px;
}

.big.four {
  width: 65px;
}

.big.ppt {
  width: 62px;
}

.big svg {
  width: 30px;
  height: 30px;
  margin-bottom: 6px;
}

.big .caret {
  margin: 9px 0 0 4px;
}

.g-account .caret {
  margin-left: 0;
}

.small-tools {
  display: flex;
  flex-direction: column;
  gap: 9px;
  padding: 2px 0 0 5px;
}

.small {
  display: flex;
  align-items: center;
  gap: 5px;
}

.small .caret {
  margin-left: 8px;
}

/* Quick access toolbar */

.quick {
  display: flex;
  align-items: center;
  height: 40px;
}

.q {
  display: flex;
  flex: none;
  align-items: center;
  justify-content: center;
  width: 35px;
  height: 28px;
  padding-right: 1px;
}

.q svg {
  width: 20px;
  height: 20px;
}

.q.split {
  display: grid;
  grid-template-columns: 34px 10px;
  justify-items: center;
  width: 44px;
  padding: 0;
}

.q.split .caret {
  justify-self: start;
}

.q.split.wide {
  grid-template-columns: 26px 16px;
  width: 42px;
}

.q.split.wide .caret {
  justify-self: center;
}

.font-icon {
  width: 20px;
  height: 20px;
  border: 1px solid #566a86;
  background: #fff;
  color: #000;
  font-size: 16px;
  line-height: 17px;
}

.combo {
  display: flex;
  align-items: center;
  height: 27px;
  padding-right: 5px;
  border: 1px solid #c3c3c3;
  background: #fff;
}

.combo select {
  flex: 1;
  min-width: 0;
  height: 25px;
  padding: 0 0 0 2px;
  border: 0;
  background: none;
  color: #262626;
  font: inherit;
  font-size: 16px;
  appearance: none;
}

.combo-font {
  width: 106px;
  margin: 0 11px 0 5px;
}

.combo-size {
  width: 62px;
  margin-right: 4px;
}

/* Slide list */

.workspace {
  display: flex;
  flex: 1;
}

.pane {
  display: flex;
  justify-content: space-between;
  width: 194px;
}

.thumb-prev {
  width: 102px;
  margin-left: 44px;
  border-top: 1px solid #c3c3c3;
}

.section {
  display: flex;
  align-items: center;
  gap: 9px;
  margin-top: 24px;
  padding-left: 16px;
}

.slides {
  margin: 0;
  padding: 12px 0 0;
  list-style: none;
}

.slides li {
  display: flex;
  height: 83px;
  color: #444;
  font-size: 20px;
  line-height: 16px;
}

.slides li:last-child {
  height: auto;
}

.slides span {
  width: 41px;
  padding-left: 3px;
}

.slides a {
  display: block;
  width: 102px;
  height: 58px;
  margin: 3px;
  border: 1px solid #c3c3c3;
  background: #fff;
}

.slides .is-current {
  color: #d24726;
}

.slides .is-current a {
  outline: 3px solid #b7472a;
  border-color: #e6e6e6;
}

.mini {
  display: block;
  width: 40px;
  height: 23px;
  margin: 14px 0 0 30px;
  border: 1px solid #7fd3f5;
  background: #00b0f0;
}

.scrollbar {
  display: flex;
  flex-direction: column;
  width: 24px;
  margin-top: 2px;
  border-right: 1px solid #b5b5b5;
}

.scrollbar > * {
  width: 19px;
}

.scroll-up {
  display: flex;
  align-items: center;
  justify-content: center;
  height: 19px;
  border: 1px solid #c3c3c3;
  background: #fff;
}

.track-above {
  flex: 625;
  background: #dadada;
}

.scroll-thumb {
  flex: 240;
  border: 1px solid #ababab;
  background: #fff;
}

.track-below {
  flex: 157;
  background: #dadada;
}

/* Editing area */

.editor {
  display: grid;
  flex: 1;
  grid-template-columns: 17px 1fr;
  grid-template-rows: 17px auto;
  column-gap: 185px;
  row-gap: 102px;
  align-content: start;
  padding: 5px 178px 17px 7px;
}

.ruler {
  position: relative;
  display: flex;
  background: #fff;
  color: #444;
}

.ruler span {
  flex: 1;
  min-width: 0;
  line-height: 15px;
  text-align: center;
  background-repeat: no-repeat;
}

.ruler-h {
  grid-column: 2;
  margin: 0 1px 0 3px;
  padding: 0 20px;
}

.ruler-h span {
  background-image: linear-gradient(#444, #444), linear-gradient(#aaa, #aaa), linear-gradient(#aaa, #aaa);
  background-size: 1px 6px, 1px 2px, 1px 2px;
  background-position: 0 50%, 24% 50%, 76% 50%;
}

.ruler-h::before,
.ruler-h::after {
  content: "";
  position: absolute;
  top: 8px;
  left: 8px;
  width: 1px;
  height: 2px;
  background: #aaa;
}

.ruler-h::after {
  left: auto;
  right: 8px;
}

.ruler-v {
  flex-direction: column;
  grid-column: 1;
  margin: 2px 0 1px;
}

.ruler-v span {
  writing-mode: vertical-rl;
  transform: rotate(180deg);
  background-image: linear-gradient(#444, #444), linear-gradient(#aaa, #aaa), linear-gradient(#aaa, #aaa);
  background-size: 6px 1px, 2px 1px, 2px 1px;
  background-position: 50% 100%, 50% 24%, 50% 76%;
}

.marker {
  position: absolute;
}

.ruler-h .marker {
  top: 0;
  bottom: 0;
  left: 10%;
  border-left: 1px dashed #d24726;
}

.ruler-v .marker {
  top: 17%;
  left: 0;
  right: 0;
  border-top: 1px dashed #d24726;
}

.slide {
  position: relative;
  grid-column: 2;
  aspect-ratio: 1602 / 902;
  border: 1px solid #c3c3c3;
  background: #fff;
}

.shape {
  position: absolute;
  left: 30.6%;
  top: 25.2%;
  width: 38.9%;
  height: 39.7%;
  border: 1px solid #969696;
  background: #00b0f0;
}

.rotate {
  position: absolute;
  left: 50%;
  bottom: 100%;
  margin-left: -17px;
}

.handle {
  position: absolute;
  width: 14px;
  height: 14px;
  margin: -7px;
  border: 2px solid #969696;
  border-radius: 50%;
  background: #fff;
}

.nw, .n, .ne { top: 0; }
.w, .e { top: 50%; }
.sw, .s, .se { top: 100%; }
.nw, .w, .sw { left: 0; }
.n, .s { left: 50%; }
.ne, .e, .se { left: 100%; }
```
